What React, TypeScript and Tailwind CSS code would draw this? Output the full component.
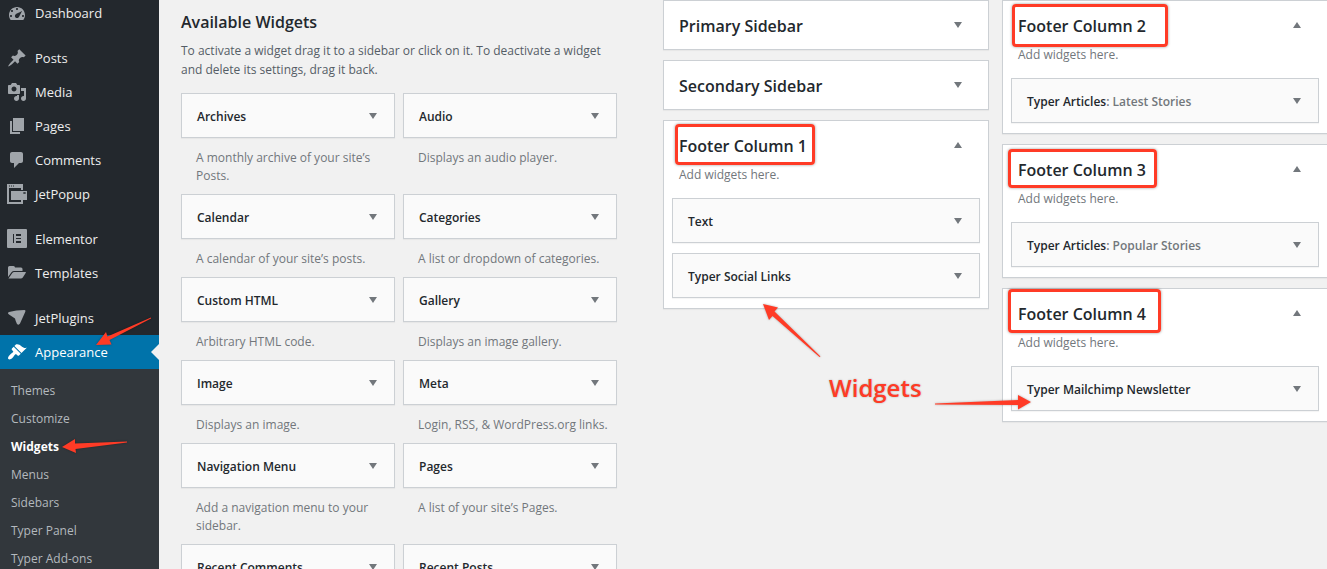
import { ReactNode } from "react";

interface IWidget {
  name: string;
  title?: string;
  description?: string;
}

interface ISidebar {
  name: string;
  // position of the highlight frame around the title
  mark?: string;
  widgets?: IWidget[];
}

const icons: Record<string, ReactNode> = {
  dashboard: (
    <path d="M3.76 17h12.48c1.1-1.37 1.76-3.11 1.76-5 0-4.42-3.58-8-8-8s-8 3.58-8 8c0 1.89.66 3.63 1.76 5zM9 6c0-.55.45-1 1-1s1 .45 1 1c0 .56-.45 1-1 1s-1-.44-1-1zM4 8c0-.55.45-1 1-1s1 .45 1 1c0 .56-.45 1-1 1s-1-.44-1-1zm4.52 3.4c.84-.83 6.51-3.5 6.51-3.5s-2.66 5.68-3.49 6.51c-.84.84-2.18.84-3.02 0-.83-.83-.83-2.18 0-3.01zM3 13c0-.55.45-1 1-1s1 .45 1 1c0 .56-.45 1-1 1s-1-.44-1-1zm12 0c0-.55.45-1 1-1s1 .45 1 1c0 .56-.45 1-1 1s-1-.44-1-1z" fillRule="evenodd" />
  ),
  posts: (
    <path d="M10.44 3.02l1.82-1.82 6.36 6.35-1.83 1.82c-1.05-.68-2.48-.57-3.41.36l-.75.75c-.92.93-1.04 2.35-.35 3.41l-1.83 1.82-2.41-2.41-2.8 2.79c-.42.42-3.38 2.71-3.8 2.29s1.86-3.39 2.28-3.81l2.79-2.79L4.1 9.36l1.83-1.82c1.05.69 2.48.57 3.4-.36l.75-.75c.93-.92 1.05-2.35.36-3.41z" />
  ),
  media: (
    <path d="M13 11V4c0-.55-.45-1-1-1h-1.67L9 1H5L3.67 3H2c-.55 0-1 .45-1 1v7c0 .55.45 1 1 1h10c.55 0 1-.45 1-1zM7 4.5c1.38 0 2.5 1.12 2.5 2.5S8.38 9.5 7 9.5 4.5 8.38 4.5 7 5.62 4.5 7 4.5zM14 6h5v10.5c0 1.38-1.12 2.5-2.5 2.5S14 17.88 14 16.5s1.12-2.5 2.5-2.5c.17 0 .34.02.5.05V9h-3V6zm-4 8.05V13h2v3.5c0 1.38-1.12 2.5-2.5 2.5S7 17.88 7 16.5 8.12 14 9.5 14c.17 0 .34.02.5.05z" fillRule="evenodd" />
  ),
  pages: <path d="M6 15V2h11v13H6zm-1 1h8v2H3V5h2v11z" />,
  comments: (
    <path d="M5 2h9c1.100 0 2 .9 2 2v7c0 1.100-.9 2-2 2h-2l-5 5v-5H5c-1.100 0-2-.9-2-2V4c0-1.100.9-2 2-2z" />
  ),
  jetpopup: (
    <>
      <path d="M0 0h16v6h-2V4H2v14h12v-2h2v4H0zM2 1.500v1h1v-1zM4 1.500v1h1v-1zM6 1.500v1h1v-1z" fillRule="evenodd" />
      <path d="M4 7h16v9H4zM16 8l1 1-1 1h1l.5-.5.5.5h1l-1-1 1-1h-1l-.5.5L17 8z" fillRule="evenodd" />
    </>
  ),
  elementor: (
    <path d="M1 0h18q1 0 1 1v17q0 1-1 1H1q-1 0-1-1V1q0-1 1-1zM6 5v9h1V5zM9 5v2h5V5zM9 9v1h5V9zM9 12v2h5v-2z" fillRule="evenodd" />
  ),
  templates: (
    <path d="M1 14V4.500Q1 3 2.500 3h4Q8 3 8 4.500h6q1.500 0 1.500 1.500V8H7Q5.500 8 4.500 9.200zM1.500 15.500L5.300 10Q6 9 7.200 9H18.500q.8 0 .3.800L15.800 14.500q-.7 1-2 1z" />
  ),
  jetplugins: (
    <path d="M2 4Q9 2 17.500 2q1.500.2.800 1.700L13 15.500q-1.200 2-3 .5Q8.500 13 8 10.500L2 6.500Q0 5 2 4z" />
  ),
  appearance: (
    <path d="M14.480 11.060L7.410 3.990l1.500-1.500c.5-.56 2.300-.47 3.510.32 1.210.8 1.430 1.280 2.910 2.100 1.180.64 2.450 1.260 4.450.85zm-.71.71L6.700 4.700 4.930 6.470c-.39.39-.39 1.020 0 1.410l1.060 1.060c.39.39.39 1.030 0 1.420-.6.6-1.430 1.110-2.210 1.690-.35.26-.7.53-1.010.84C1.430 14.230.4 16.080 1.400 17.070c.99 1 2.840-.03 4.180-1.360.31-.31.58-.66.85-1.020.57-.78 1.080-1.610 1.690-2.210.39-.39 1.020-.39 1.410 0l1.060 1.060c.39.39 1.020.39 1.410 0z" />
  ),
};

const menuGroups = [
  [{ name: "Dashboard", icon: "dashboard" }],
  [
    { name: "Posts", icon: "posts" },
    { name: "Media", icon: "media" },
    { name: "Pages", icon: "pages" },
    { name: "Comments", icon: "comments" },
    { name: "JetPopup", icon: "jetpopup" },
  ],
  [
    { name: "Elementor", icon: "elementor" },
    { name: "Templates", icon: "templates" },
  ],
  [
    { name: "JetPlugins", icon: "jetplugins" },
    { name: "Appearance", icon: "appearance" },
  ],
];

const submenu = ["Themes", "Customize", "Widgets", "Menus", "Sidebars", "Typer Panel", "Typer Add-ons"];

const available: IWidget[] = [
  { name: "Archives", description: "A monthly archive of your site’s Posts." },
  { name: "Audio", description: "Displays an audio player." },
  { name: "Calendar", description: "A calendar of your site’s posts." },
  { name: "Categories", description: "A list or dropdown of categories." },
  { name: "Custom HTML", description: "Arbitrary HTML code." },
  { name: "Gallery", description: "Displays an image gallery." },
  { name: "Image", description: "Displays an image." },
  { name: "Meta", description: "Login, RSS, & WordPress.org links." },
  { name: "Navigation Menu", description: "Add a navigation menu to your sidebar." },
  { name: "Pages", description: "A list of your site’s Pages." },
  { name: "Recent Comments" },
  { name: "Recent Posts" },
];

const firstColumn: ISidebar[] = [
  { name: "Primary Sidebar" },
  { name: "Secondary Sidebar" },
  {
    name: "Footer Column 1",
    mark: "left-[11px] top-[3px] h-[41px] w-[140px]",
    widgets: [{ name: "Text" }, { name: "Typer Social Links" }],
  },
];

const secondColumn: ISidebar[] = [
  {
    name: "Footer Column 2",
    mark: "left-[9px] top-[3px] h-[43px] w-[156px]",
    widgets: [{ name: "Typer Articles", title: "Latest Stories" }],
  },
  {
    name: "Footer Column 3",
    mark: "left-[5px] top-[4px] h-[39px] w-[149px]",
    widgets: [{ name: "Typer Articles", title: "Popular Stories" }],
  },
  {
    name: "Footer Column 4",
    mark: "left-[5px] top-0 h-[44px] w-[153px]",
    widgets: [{ name: "Typer Mailchimp Newsletter" }],
  },
];

const Arrow = ({ up = false }: { up?: boolean }) => (
  <svg className="shrink-0 fill-[#72777c]" width="8" height="6" viewBox="0 0 8 6" aria-hidden="true">
    <path d={up ? "M4 0l4 6H0z" : "M0 0h8L4 6z"} />
  </svg>
);

const Widget = ({ widget }: { widget: IWidget }) => (
  <button
    type="button"
    className="flex h-[45px] w-full items-center justify-between border border-[#ccd0d4] bg-[#fafafa] pl-[15px] pr-[17px] text-left text-xs font-semibold text-[#23282d] shadow-[0_1px_1px_rgba(0,0,0,0.04)]"
  >
    <span className="pt-0.5">
      {widget.name}
      {widget.title && <span className="text-[#72777c]">: {widget.title}</span>}
    </span>
    <Arrow />
  </button>
);

const Sidebar = ({ sidebar, edge }: { sidebar: ISidebar; edge?: boolean }) => (
  <section
    className={`border border-[#ccd0d4] bg-white shadow-[0_1px_1px_rgba(0,0,0,0.04)] ${edge ? "border-r-0" : ""}`}
  >
    <div className="relative">
      <button
        type="button"
        className="flex h-12 w-full items-center justify-between pl-[15px] pr-[26px] text-left text-base font-semibold text-[#23282d]"
      >
        <h2 className="pt-0.5">{sidebar.name}</h2>
        <Arrow up={!!sidebar.widgets} />
      </button>
      {sidebar.mark && (
        <span
          className={`pointer-events-none absolute rounded border-[3px] border-[#ff3b26] shadow-[0_0_3px_rgba(0,0,0,0.4)] ${sidebar.mark}`}
        />
      )}
    </div>
    {sidebar.widgets && (
      <div className="px-2 pb-[10px]">
        <p className="-mt-1 mb-[14px] pl-[7px] text-xs leading-[19px] text-[#72777c]">Add widgets here.</p>
        <div className="flex flex-col gap-[10px]">
          {sidebar.widgets.map((widget) => (
            <Widget key={widget.name} widget={widget} />
          ))}
        </div>
      </div>
    )}
  </section>
);

const AdminMenu = () => (
  <nav className="-mt-1 w-[159px] shrink-0 bg-[#23282d] text-[13px] text-[#eee]">
    {menuGroups.map((group, i) => (
      <ul key={i} className={i > 0 ? "mt-[11px]" : ""}>
        {group.map((item) => {
          const current = item.name === "Appearance";
          return (
            <li key={item.name}>
              <a
                href="#"
                className={`relative flex h-[34px] items-center gap-2 pl-[7px] ${current ? "bg-[#0073aa] text-white" : ""}`}
              >
                <svg
                  className={`size-5 ${current ? "fill-white" : "fill-[#a0a5aa]"}`}
                  viewBox="0 0 20 20"
                  aria-hidden="true"
                >
                  {icons[item.icon]}
                </svg>
                <span className="pt-0.5">{item.name}</span>
                {current && (
                  <span className="absolute right-0 border-y-8 border-r-8 border-y-transparent border-r-[#f1f1f1]" />
                )}
              </a>
            </li>
          );
        })}
      </ul>
    ))}
    <ul className="bg-[#32373c] py-2 text-xs">
      {submenu.map((name) => (
        <li key={name}>
          <a
            href="#"
            className={`flex h-7 items-center pl-[11px] ${name === "Widgets" ? "font-bold text-white" : "text-[#b4b9be]"}`}
          >
            {name}
          </a>
        </li>
      ))}
    </ul>
  </nav>
);

const Annotations = () => (
  <div className="pointer-events-none absolute inset-0">
    <svg className="absolute left-0 top-0 drop-shadow-[0_0_1px_rgba(0,0,0,0.3)]" width="1327" height="569" fill="#ff3b26">
      <path d="M96 345L106 332l1.500 4.500L151 317.500v1L109.500 340l2 4.500z" />
      <path d="M62 447L75 439v4.500l52-2v1L75.500 449l.5 4z" />
      <path d="M763 304l15 3.500-3.500 4 46 45-1 .5-47-41-3.500 4z" />
      <path d="M1031 402l-13 7.500v-4.500l-83-.5v-1l83-3.500V395z" />
    </svg>
    <p className="absolute left-[829px] top-[372px] text-2xl font-semibold text-[#ff3b26] [text-shadow:0_0_2px_rgba(0,0,0,0.3)]">
      Widgets
    </p>
  </div>
);

const App = () => {
  return (
    <div className="relative flex h-screen overflow-hidden bg-[#f1f1f1] font-['Open_Sans','Noto_Sans',sans-serif]">
      <AdminMenu />
      <main className="flex min-w-0 flex-1 items-start pl-[22px]">
        <section className="mr-[46px] min-w-0 flex-[436]">
          <h2 className="pt-[10px] text-base leading-6 font-semibold text-[#23282d]">Available Widgets</h2>
          <p className="mt-[7px] mb-[14px] text-xs leading-[19px] text-[#555d66]">
            To activate a widget drag it to a sidebar or click on it. To deactivate a widget and delete its settings, drag it
            back.
          </p>
          <div className="grid grid-cols-2 gap-x-2">
            {available.map((widget) => (
              <div key={widget.name}>
                <Widget widget={widget} />
                <p className="pl-[15px] pr-2 pt-[11px] pb-[9px] text-xs leading-[18px] text-[#72777c]">
                  {widget.description}
                </p>
              </div>
            ))}
          </div>
        </section>
        <div className="mr-[13px] flex min-w-0 flex-[326] flex-col gap-[10px]">
          {firstColumn.map((sidebar) => (
            <Sidebar key={sidebar.name} sidebar={sidebar} />
          ))}
        </div>
        <div className="flex min-w-0 flex-[325] flex-col gap-[10px]">
          {secondColumn.map((sidebar) => (
            <Sidebar key={sidebar.name} sidebar={sidebar} edge />
          ))}
        </div>
      </main>
      <Annotations />
    </div>
  );
};

export default App;
